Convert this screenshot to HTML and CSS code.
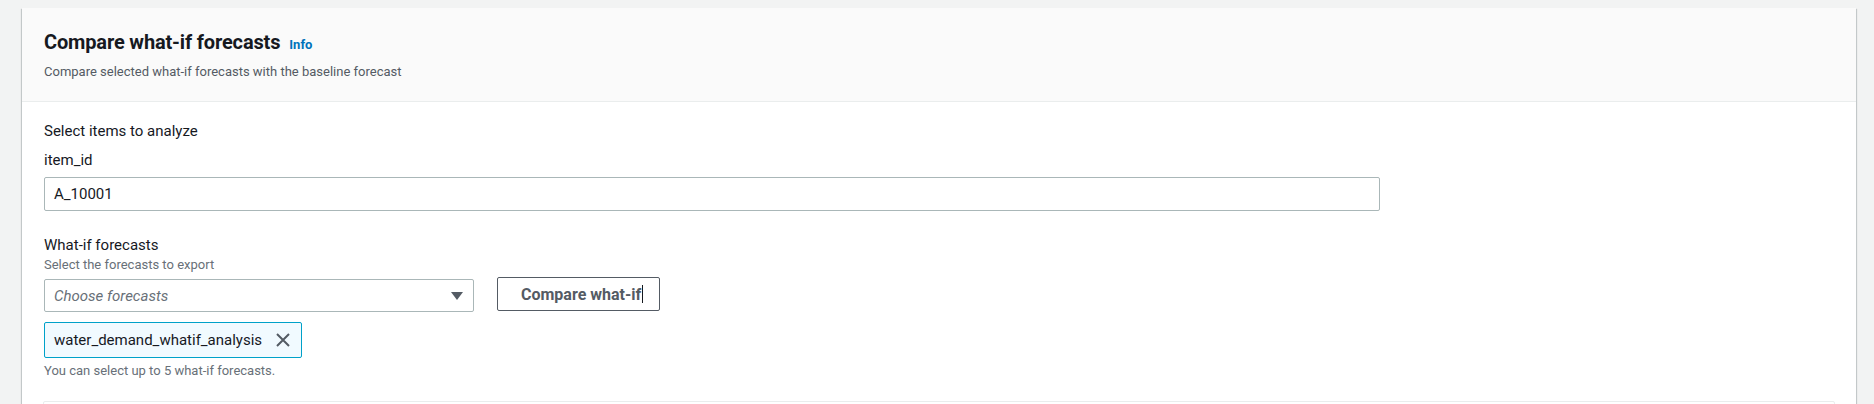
FILE: index.html
```html
<!DOCTYPE html>
<html lang="en">
<head>
  <meta charset="UTF-8">
  <meta name="viewport" content="width=device-width, initial-scale=1.0">
  <link rel="stylesheet" href="styles.css">
</head>
<body>
<div class="page">
  <div class="card">
    <div class="card-header">
      <div class="title-row">
        <h2 class="title">Compare what-if forecasts</h2>
        <a class="info-link" href="#">Info</a>
      </div>
      <div class="subtitle">Compare selected what-if forecasts with the baseline forecast</div>
    </div>

    <div class="card-body">
      <div class="section-label">Select items to analyze</div>

      <div class="field">
        <label class="field-label">item_id</label>
        <div class="text-input">A_10001</div>
      </div>

      <div class="field field-gap">
        <label class="field-label">What-if forecasts</label>
        <div class="field-desc">Select the forecasts to export</div>
        <div class="select-row">
          <div class="select-box">
            <span class="placeholder">Choose forecasts</span>
            <svg class="caret-down" width="12" height="8" viewBox="0 0 12 8">
              <polygon points="0,0 12,0 6,8" fill="#545b64"/>
            </svg>
          </div>
          <button class="btn">Compare what-if<span class="text-cursor"></span></button>
        </div>
        <div class="token">
          <span>water_demand_whatif_analysis</span>
          <svg class="token-close" width="14" height="14" viewBox="0 0 14 14">
            <path d="M1 1 L13 13 M13 1 L1 13" stroke="#545b64" stroke-width="2" fill="none"/>
          </svg>
        </div>
        <div class="hint">You can select up to 5 what-if forecasts.</div>
      </div>

      <div class="inner-box"></div>
    </div>
  </div>
</div>
</body>
</html>
```

FILE: styles.css
```css
body {
  margin: 0;
  background-color: #f2f3f3;
  color: #16191f;
  font-family: Roboto, "Liberation Sans", Arial, sans-serif;
  font-size: 15px;
  line-height: 22px;
  height: 404px;
  overflow: hidden;
}

.page {
  padding: 8px 18px 0 22px;
}

.card {
  background: #ffffff;
  box-shadow: 0 1px 1px 0 rgba(0, 28, 36, 0.3), 1px 1px 1px 0 rgba(0, 28, 36, 0.15), -1px 1px 1px 0 rgba(0, 28, 36, 0.15);
  min-height: 420px;
}

.card-header {
  background: #fafafa;
  border-bottom: 1px solid #eaeded;
  padding: 22px 22px 21px 22px;
}

.title-row {
  display: flex;
  align-items: baseline;
  gap: 9px;
}

.title {
  margin: 0;
  font-size: 20px;
  line-height: 24px;
  font-weight: 700;
  letter-spacing: -0.15px;
  color: #16191f;
}

.info-link {
  font-size: 13px;
  font-weight: 700;
  color: #0073bb;
  text-decoration: none;
}

.subtitle {
  margin-top: 8px;
  font-size: 13px;
  line-height: 16px;
  color: #545b64;
}

.card-body {
  padding: 18px 21px 0 22px;
}

.field {
  margin-top: 7px;
}

.field-gap {
  margin-top: 23px;
}

.field-label {
  display: block;
  margin-bottom: 6px;
}

.text-input {
  width: 1336px;
  height: 34px;
  box-sizing: border-box;
  border: 1px solid #aab7b8;
  border-radius: 2px;
  padding: 0 9px;
  line-height: 32px;
}

.field-desc {
  margin-top: -5px;
  font-size: 13px;
  line-height: 16px;
  color: #687078;
}

.select-row {
  display: flex;
  align-items: flex-start;
  gap: 23px;
  margin-top: 4px;
}

.select-box {
  width: 430px;
  height: 33px;
  box-sizing: border-box;
  margin-top: 2px;
  border: 1px solid #aab7b8;
  border-radius: 2px;
  padding: 0 10px 0 9px;
  display: flex;
  align-items: center;
  justify-content: space-between;
}

.placeholder {
  font-style: italic;
  color: #687078;
}

.btn {
  width: 163px;
  height: 34px;
  box-sizing: border-box;
  background: #ffffff;
  border: 1px solid #545b64;
  border-radius: 2px;
  font-family: inherit;
  font-size: 16px;
  font-weight: 700;
  color: #545b64;
  padding: 0 10px 0 23px;
  display: flex;
  align-items: center;
  white-space: nowrap;
}

.text-cursor {
  display: inline-block;
  width: 1px;
  height: 18px;
  margin-left: 1px;
  background: #16191f;
}

.token {
  margin-top: 10px;
  display: inline-flex;
  align-items: center;
  gap: 14px;
  height: 36px;
  box-sizing: border-box;
  padding: 0 11px 0 9px;
  background: #f1faff;
  border: 1px solid #00a1c9;
  border-radius: 2px;
}

.hint {
  margin-top: 5px;
  font-size: 13px;
  line-height: 16px;
  color: #687078;
}

.inner-box {
  margin-top: 22px;
  margin-left: -1px;
  height: 40px;
  border: 1px solid #eaeded;
  border-radius: 2px;
}
```
